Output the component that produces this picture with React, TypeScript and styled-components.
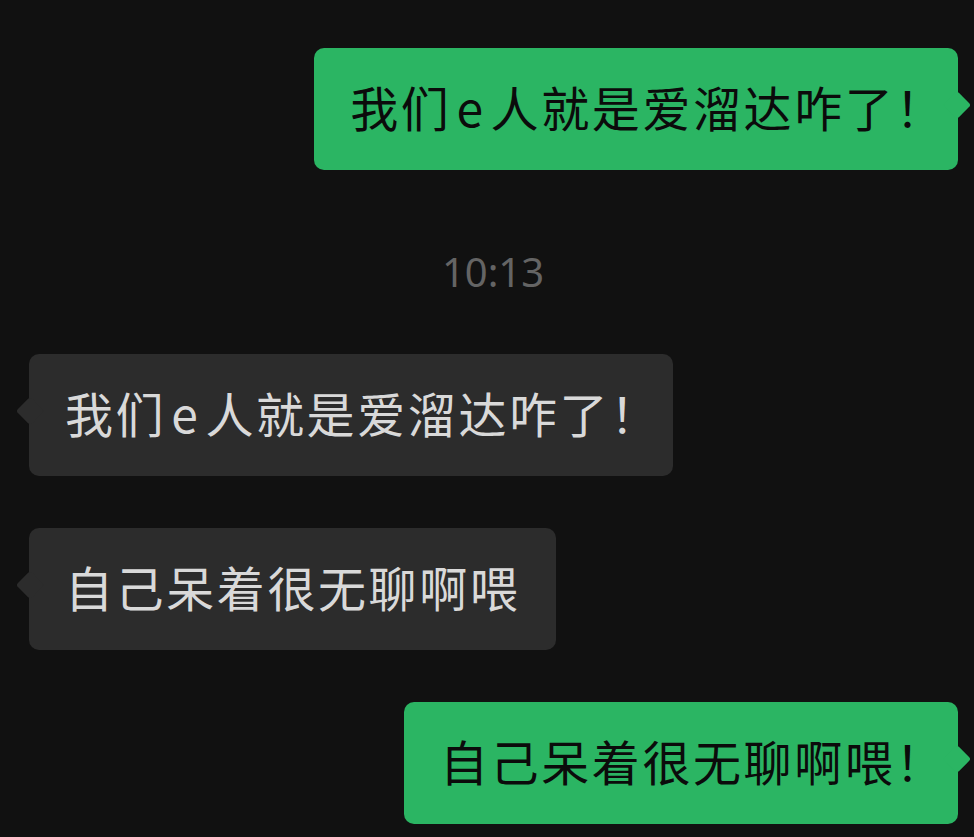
import React, { FC } from "react";
import styled, { createGlobalStyle, css } from "styled-components";

const GlobalStyle = createGlobalStyle`
  html, body {
    margin: 0;
    padding: 0;
    background: #111111;
  }
  body {
    font-family: "Noto Sans CJK SC", "Noto Sans", sans-serif;
  }
`;

const ChatWrapper = styled.div`
  width: 974px;
  height: 837px;
  overflow: hidden;
  background: #111111;
  display: flex;
  flex-flow: column nowrap;
  padding-top: 48px;
  box-sizing: border-box;
`;

const Row = styled.div<{ $mine: boolean; $gap: number }>`
  display: flex;
  justify-content: ${(p) => (p.$mine ? "flex-end" : "flex-start")};
  padding: 0 16px 0 29px;
  margin-top: ${(p) => p.$gap}px;
`;

const Bubble = styled.div<{ $mine: boolean }>`
  position: relative;
  padding: 22px 36px 28px;
  border-radius: 10px;
  font-size: 48px;
  line-height: 72px;
  letter-spacing: 2.6px;
  font-feature-settings: "halt";
  white-space: nowrap;
  background: ${(p) => (p.$mine ? "#2bb563" : "#2c2c2c")};
  color: ${(p) => (p.$mine ? "#0b0b0b" : "#d9d9d9")};

  &::after {
    content: "";
    position: absolute;
    top: 47px;
    width: 20px;
    height: 20px;
    border-radius: 3px;
    background: inherit;
    transform: rotate(45deg);
    ${(p) =>
      p.$mine
        ? css`
            right: -9px;
          `
        : css`
            left: -9px;
          `}
  }
`;

// latin letters get a little breathing room next to CJK, like iOS does
const Latin = styled.span`
  margin: 0 5px;
`;

const TimeStamp = styled.div`
  margin-top: 74px;
  margin-bottom: 54px;
  text-align: center;
  font-family: "Noto Sans", sans-serif;
  font-size: 40px;
  line-height: 56px;
  color: #646464;
  padding-left: 12px;
`;

type Msg = { text: string; mine: boolean; gap: number };

const before: Msg[] = [{ text: "我们e人就是爱溜达咋了！", mine: true, gap: 0 }];

const after: Msg[] = [
  { text: "我们e人就是爱溜达咋了！", mine: false, gap: 0 },
  { text: "自己呆着很无聊啊喂", mine: false, gap: 52 },
  { text: "自己呆着很无聊啊喂！", mine: true, gap: 52 },
];

const renderText = (text: string) =>
  text.split(/([A-Za-z]+)/).map((part, i) =>
    /^[A-Za-z]+$/.test(part) ? <Latin key={i}>{part}</Latin> : part
  );

const Message: FC<{ msg: Msg }> = ({ msg }) => (
  <Row $mine={msg.mine} $gap={msg.gap}>
    <Bubble $mine={msg.mine}>{renderText(msg.text)}</Bubble>
  </Row>
);

const App: FC = () => {
  return (
    <>
      <GlobalStyle />
      <ChatWrapper>
        {before.map((m, i) => (
          <Message key={"b" + i} msg={m} />
        ))}
        <TimeStamp>10:13</TimeStamp>
        {after.map((m, i) => (
          <Message key={"a" + i} msg={m} />
        ))}
      </ChatWrapper>
    </>
  );
};

export default App;
